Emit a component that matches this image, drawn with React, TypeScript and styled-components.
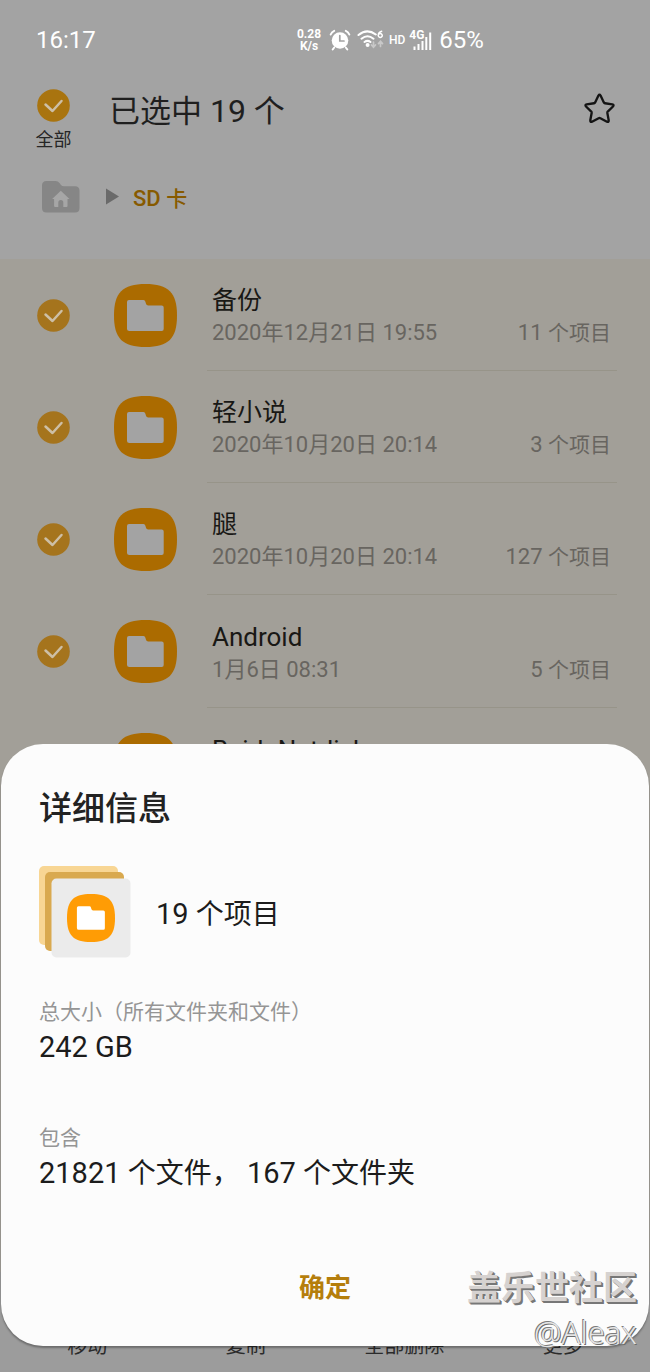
import React from "react";
import styled, { createGlobalStyle } from "styled-components";

const GlobalStyle = createGlobalStyle`
  * { box-sizing: border-box; }
  body {
    margin: 0;
    background: #9c9c9c;
    font-family: Roboto, "Noto Sans CJK SC", sans-serif;
  }
  button { font: inherit; border: 0; padding: 0; background: none; cursor: pointer; }
  svg { display: block; }
`;

/* Latin runs are set slightly larger than the Chinese characters beside them. */
const Latin = styled.span<{ $size: number }>`
  font-size: ${(p) => p.$size}px;
`;

function Mixed({ text, latin }: { text: string; latin: number }) {
  return (
    <>
      {text.split(/([\x20-\x7e]+)/).map((run, i) =>
        i % 2 ? (
          <Latin key={i} $size={latin}>
            {run}
          </Latin>
        ) : (
          run
        )
      )}
    </>
  );
}

const Screen = styled.div`
  position: relative;
  display: flex;
  flex-direction: column;
  min-height: 100vh;
  overflow: hidden;
  background: #a3a3a3;
`;

const StatusBar = styled.div`
  display: flex;
  align-items: center;
  height: 80px;
  padding-left: 36px;
  color: #fff;
  font-size: 24px;
`;

const Clock = styled.time`
  width: 260px;
`;

const StatusIcons = styled.div`
  display: flex;
  align-items: center;
`;

const NetSpeed = styled.span`
  width: 26px;
  margin-right: 7px;
  font-size: 12px;
  font-weight: 700;
  line-height: 12px;
  text-align: center;
`;

const HdLabel = styled.span`
  margin: 0 4px;
  font-size: 12px;
  font-weight: 500;
`;

const Signal = styled.span`
  display: grid;
  width: 23px;
  height: 22px;
  margin-right: 7px;
  font-size: 12px;
  font-weight: 700;
  line-height: 12px;
  > * { grid-area: 1 / 1; }
`;

const TopBar = styled.header`
  display: flex;
  align-items: flex-start;
  height: 80px;
  padding: 9px 35px 0;
`;

const SelectAll = styled.label`
  display: flex;
  flex-direction: column;
  align-items: center;
  width: 37px;
  font-size: 18px;
  line-height: 35px;
  color: #262626;
`;

const Title = styled.h1`
  flex: 1;
  margin: 0 0 0 37px;
  font-size: 31px;
  font-weight: 400;
  line-height: 44px;
  color: #1f1f1f;
`;

const StarButton = styled.button`
  margin-top: 4px;
`;

const Breadcrumb = styled.nav`
  display: flex;
  align-items: center;
  height: 73px;
  margin-bottom: 26px;
  padding-left: 42px;
`;

const Crumb = styled.a`
  font-size: 21px;
  font-weight: 500;
  color: #875a00;
  text-decoration: none;
`;

const Arrow = styled.svg`
  margin: 0 14px 0 26px;
`;

const CheckCell = styled.span`
  display: grid;
  width: 33px;
  height: 33px;
  > * { grid-area: 1 / 1; }
`;

const CheckInput = styled.input`
  width: 33px;
  height: 33px;
  margin: 0;
  opacity: 0;
`;

const FileList = styled.ul`
  flex: 1;
  margin: 0;
  padding: 0;
  list-style: none;
  background: #a29f98;
`;

const Row = styled.li`
  display: flex;
  align-items: center;
  padding: 0 33px 0 37px;
`;

const RowIcon = styled.span`
  margin: 0 30px 0 44px;
`;

const RowBody = styled.div`
  flex: 1;
  padding: 26px 6px 21px 5px;
  border-bottom: 1px solid #979489;
`;

const Name = styled.div`
  font-size: 25px;
  line-height: 32px;
  color: #191815;
`;

const Meta = styled.div`
  display: flex;
  justify-content: space-between;
  height: 32px;
  font-size: 22px;
  line-height: 32px;
  color: #686560;
`;

const Count = styled.span`
  font-size: 21px;
`;

const ActionBar = styled.footer`
  display: flex;
  align-items: flex-end;
  height: 100px;
  padding: 0 8px 10px;
  background: #9c9c9c;
`;

const Action = styled.button`
  flex: 1;
  && { font-size: 20px; }
  line-height: 32px;
  color: #2b2b2b;
`;

const Dialog = styled.section`
  position: absolute;
  left: 1px;
  right: 1px;
  bottom: 26px;
  display: flex;
  flex-direction: column;
  padding: 41px 38px 28px;
  border-radius: 42px;
  background: #fcfcfc;
  box-shadow: 0 2px 2px rgba(0, 0, 0, 0.3);
  color: #1c1c1c;
`;

const DialogTitle = styled.h2`
  margin: 0 0 33px;
  font-size: 33px;
  font-weight: 500;
  line-height: 48px;
  color: #222;
`;

const Summary = styled.div`
  display: flex;
  align-items: center;
  margin-bottom: 38px;
  font-size: 28px;
  line-height: 38px;
`;

const SummaryText = styled.span`
  margin: 4px 0 0 25px;
`;

const Details = styled.dl`
  display: grid;
  margin: 0 0 66px;
`;

const Label = styled.dt`
  font-size: 21px;
  line-height: 32px;
  color: #959595;
`;

const Value = styled.dd`
  height: 38px;
  margin: 0;
  font-size: 28px;
  line-height: 38px;
  white-space: pre;
  &:not(:last-child) { margin-bottom: 56px; }
`;

const Confirm = styled.button`
  align-self: center;
  padding: 0 40px;
  && { font-size: 26px; font-weight: 700; }
  line-height: 60px;
  color: #b57e0c;
`;

const Watermark = styled.div`
  position: absolute;
  right: 13px;
  bottom: 18px;
  text-align: right;
  pointer-events: none;
`;

const Community = styled.div`
  font-size: 34px;
  font-weight: 700;
  line-height: 44px;
  color: #d6d2d0;
  text-shadow: 1px 1px 0 #777, 2px 2px 0 #777;
`;

const Author = styled.div`
  font-family: "Noto Sans", sans-serif;
  font-size: 31px;
  font-weight: 300;
  line-height: 44px;
  color: #e4e4e4;
  text-shadow: -1px -1px 0 #7c7c7c, 1px 1px 0 #6c6c6c;
`;

function CheckMark({ label, fill }: { label?: string; fill: string }) {
  return (
    <CheckCell>
      <svg width="33" height="33" viewBox="0 0 33 33" aria-hidden="true">
        <circle cx="16.5" cy="16.5" r="16.3" fill={fill} />
        <path d="M8.500 15.500l7 6.500L24.500 12" fill="none" stroke="#cdbfa6" strokeWidth="2.500" strokeLinecap="round" strokeLinejoin="round" />
      </svg>
      <CheckInput type="checkbox" defaultChecked aria-label={label} />
    </CheckCell>
  );
}

function FolderIcon({ size, fill, paper }: { size: number; fill: string; paper: string }) {
  return (
    <svg width={size} height={size} viewBox="0 0 63 63" aria-hidden="true">
      <path d="M31.5 0C54.500 0 63 8.500 63 31.5S54.500 63 31.5 63 0 54.500 0 31.5 8.500 0 31.5 0Z" fill={fill} />
      <path
        d="M15 16h14.500q1.500 0 1.800 1.500l.7 2.300q.4 1.700 2.200 1.700h13.500q2 0 2 2v21.500q0 2-2 2h-32.200q-2.500 0-2.500-2.500V18q0-2 2-2Z"
        fill={paper}
      />
    </svg>
  );
}

function AlarmIcon() {
  return (
    <svg width="22" height="22" viewBox="0 0 22 22" fill="none" strokeLinecap="round" aria-hidden="true">
      <circle cx="11" cy="11.500" r="8.300" fill="#fff" />
      <path d="M1.700 5.500Q2.700 3 5.200 1.900M20.300 5.500Q19.300 3 16.800 1.900" stroke="#fff" strokeWidth="2" />
      <path d="M5.200 18.500L3.700 20.500M16.800 18.500l1.500 2" stroke="#fff" strokeWidth="2" />
      <path d="M10.800 6.500v5.500h4.200" stroke="#a3a3a3" strokeWidth="1.700" />
    </svg>
  );
}

const Wifi = styled.svg`
  margin-left: 6px;
`;

function WifiIcon() {
  return (
    <Wifi width="28" height="22" viewBox="0 0 28 22" fill="none" strokeLinecap="round" aria-hidden="true">
      <path d="M1.500 6Q10 -1 18.800 5.500M4.500 9.700Q10.500 4.800 16.500 9.700M7.500 13Q10.500 10.800 13.500 13" stroke="#fff" strokeWidth="2.100" />
      <circle cx="10.600" cy="16" r="2" fill="#fff" />
      <path d="M24.700 2.300Q21.300 3.200 21.300 6.200A2 1.900 0 1 0 23.300 4.600Q21.900 4.600 21.400 5.800" stroke="#fff" strokeWidth="1.500" />
      <path d="M16.500 13v5M14.500 16l2 2.300 2-2.300M23.500 17.500v-5M21.500 14.600l2-2.300 2 2.300" stroke="#c8c8c8" strokeWidth="1.700" />
    </Wifi>
  );
}

const files = [
  { name: "备份", date: "2020年12月21日 19:55", count: "11 个项目" },
  { name: "轻小说", date: "2020年10月20日 20:14", count: "3 个项目" },
  { name: "腿", date: "2020年10月20日 20:14", count: "127 个项目" },
  { name: "Android", date: "1月6日 08:31", count: "5 个项目" },
  { name: "BaiduNetdisk", date: "", count: "" },
];

const actions = ["移动", "复制", "全部删除", "更多"];

export default function App() {
  return (
    <Screen>
      <GlobalStyle />
      <StatusBar>
        <Clock>16:17</Clock>
        <StatusIcons>
          <NetSpeed>
            0.28
            <br />
            K/s
          </NetSpeed>
          <AlarmIcon />
          <WifiIcon />
          <HdLabel>HD</HdLabel>
          <Signal>
            <span>4G</span>
            <svg width="23" height="22" viewBox="0 0 23 22" fill="#fff" aria-hidden="true">
              <path d="M4.500 17.500h2V21h-2ZM8.500 15h2v6h-2ZM12.500 12h2v9h-2ZM16.300 8h2v13h-2ZM20.200 3.500h2V21h-2Z" />
            </svg>
          </Signal>
          <span>65%</span>
        </StatusIcons>
      </StatusBar>

      <TopBar>
        <SelectAll>
          <CheckMark fill="#a9740f" />
          全部
        </SelectAll>
        <Title>
          <Mixed text="已选中 19 个" latin={32} />
        </Title>
        <StarButton aria-label="收藏">
          <svg width="31" height="31" viewBox="0 0 32 32" fill="none" stroke="#141414" strokeWidth="2.400" strokeLinejoin="round" aria-hidden="true">
            <path d="M14.900 2.700Q16 .900 17.100 2.700L20.500 9.700Q20.900 10.400 21.700 10.600L29.200 11.700Q31.400 12.200 29.900 13.900L24.500 19.200Q24 19.800 24.100 20.600L25.500 28.200Q25.600 30.400 23.700 29.600L16.900 26Q16 25.600 15.100 26L8.300 29.600Q6.400 30.400 6.500 28.200L7.900 20.600Q8 19.800 7.500 19.200L2.100 13.900Q.600 12.200 2.800 11.700L10.300 10.600Q11.100 10.400 11.500 9.700Z" />
          </svg>
        </StarButton>
      </TopBar>

      <Breadcrumb aria-label="路径">
        <a href="#home" aria-label="主页">
          <svg width="38" height="32" viewBox="0 0 38 32" aria-hidden="true">
            <path d="M4.500 0h9q2.500 0 4 2l1.500 2q1 1.200 3 1.200h11Q37.500 5.200 37.500 9.700V27q0 4.500-4.500 4.500H4.500Q0 31.500 0 27V4.500Q0 0 4.500 0Z" fill="#868686" />
            <path d="M18.800 9.800L27.500 18h-2v7q0 1-1 1h-3.200v-4.500q0-2.500-2.500-2.500t-2.500 2.500V26h-3.200q-1 0-1-1v-7h-2Z" fill="#a6a6a6" />
          </svg>
        </a>
        <Arrow width="13" height="17" viewBox="0 0 13 17" aria-hidden="true">
          <path d="M0 .500L13 8.500 0 16.500Z" fill="#6a6a6a" />
        </Arrow>
        <Crumb href="#sd">
          <Mixed text="SD 卡" latin={22} />
        </Crumb>
      </Breadcrumb>

      <FileList>
        {files.map((f) => (
          <Row key={f.name}>
            <CheckMark label={f.name} fill="#a5741d" />
            <RowIcon>
              <FolderIcon size={63} fill="#ab6b00" paper="#a3a3a3" />
            </RowIcon>
            <RowBody>
              <Name>
                <Mixed text={f.name} latin={26} />
              </Name>
              <Meta>
                <span>
                  <Mixed text={f.date} latin={22} />
                </span>
                <Count>
                  <Mixed text={f.count} latin={22} />
                </Count>
              </Meta>
            </RowBody>
          </Row>
        ))}
      </FileList>

      <ActionBar>
        {actions.map((a) => (
          <Action key={a}>{a}</Action>
        ))}
      </ActionBar>

      <Dialog role="dialog" aria-labelledby="details-title">
        <DialogTitle id="details-title">详细信息</DialogTitle>
        <Summary>
          <svg width="92" height="92" viewBox="0 0 92 92" aria-hidden="true">
            <rect width="79" height="79" rx="5" fill="#f8d694" />
            <rect x="6" y="6" width="79" height="79" rx="5" fill="#d9a94f" />
            <rect x="12.500" y="12.500" width="79" height="79" rx="5" fill="#ebebeb" />
            <g transform="translate(28 28)">
              <FolderIcon size={48} fill="#ff9c05" paper="#fff" />
            </g>
          </svg>
          <SummaryText>
            <Mixed text="19 个项目" latin={29} />
          </SummaryText>
        </Summary>
        <Details>
          <Label>总大小（所有文件夹和文件）</Label>
          <Value>
            <Mixed text="242 GB" latin={29} />
          </Value>
          <Label>包含</Label>
          <Value>
            <Mixed text="21821 个文件， 167 个文件夹" latin={29} />
          </Value>
        </Details>
        <Confirm>确定</Confirm>
      </Dialog>

      <Watermark>
        <Community>盖乐世社区</Community>
        <Author>@Aleax</Author>
      </Watermark>
    </Screen>
  );
}
